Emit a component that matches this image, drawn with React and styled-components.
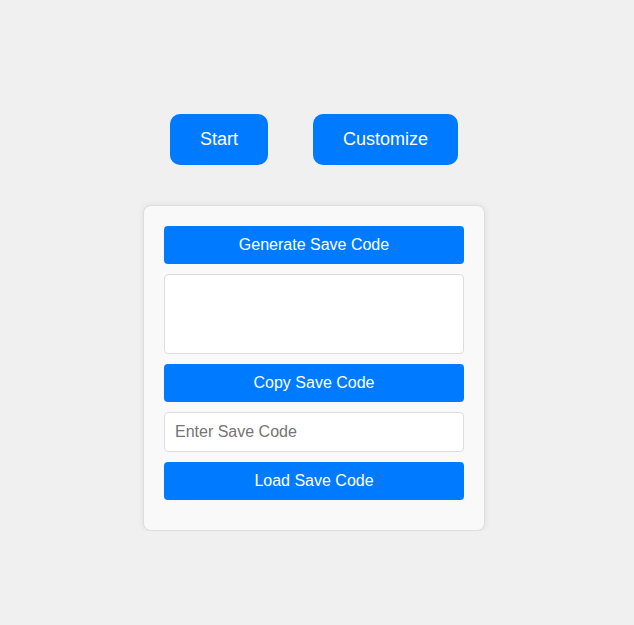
import React from "react";
import styled, { createGlobalStyle } from "styled-components";

const Global = createGlobalStyle`
  html, body { margin: 0; padding: 0; background: #f0f0f0; }
  body { font-family: "Liberation Sans", Arial, sans-serif; }
`;

const Page = styled.div`
  display: flex;
  flex-direction: column;
  align-items: center;
  padding: 114px 6px 0 0;
  width: 634px;
  box-sizing: border-box;
`;

const MenuRow = styled.div`
  display: flex;
  gap: 45px;
`;

const MenuButton = styled.button`
  height: 51px;
  padding: 0 30px;
  background: #007bff;
  color: #fff;
  border: none;
  border-radius: 10px;
  font-family: "Liberation Sans", Arial, sans-serif;
  font-size: 18px;
  cursor: pointer;
`;

const Panel = styled.div`
  margin-top: 40px;
  width: 342px;
  box-sizing: border-box;
  padding: 20px;
  background: #f9f9f9;
  border: 1px solid #dddddd;
  border-radius: 8px;
  box-shadow: 0 0 6px rgba(0, 0, 0, 0.08);
  display: flex;
  flex-direction: column;
  gap: 10px;
`;

const ActionButton = styled.button`
  height: 38px;
  width: 100%;
  background: #007bff;
  color: #fff;
  border: none;
  border-radius: 4px;
  font-family: "Liberation Sans", Arial, sans-serif;
  font-size: 16px;
  cursor: pointer;
`;

const CodeArea = styled.textarea`
  height: 80px;
  width: 100%;
  box-sizing: border-box;
  border: 1px solid #dddddd;
  border-radius: 4px;
  background: #fff;
  padding: 10px;
  resize: none;
  font-family: "Liberation Sans", Arial, sans-serif;
  font-size: 16px;
`;

const CodeInput = styled.input`
  height: 40px;
  width: 100%;
  box-sizing: border-box;
  border: 1px solid #dddddd;
  border-radius: 4px;
  background: #fff;
  padding: 0 10px;
  font-family: "Liberation Sans", Arial, sans-serif;
  font-size: 16px;
  color: #333;
  &::placeholder { color: #757575; }
`;

const Spacer = styled.div`
  height: 0;
`;

export default function App() {
  return (
    <>
      <Global />
      <Page>
        <MenuRow>
          <MenuButton>Start</MenuButton>
          <MenuButton>Customize</MenuButton>
        </MenuRow>
        <Panel>
          <ActionButton>Generate Save Code</ActionButton>
          <CodeArea readOnly />
          <ActionButton>Copy Save Code</ActionButton>
          <CodeInput placeholder="Enter Save Code" />
          <ActionButton>Load Save Code</ActionButton>
          <Spacer />
        </Panel>
      </Page>
    </>
  );
}
